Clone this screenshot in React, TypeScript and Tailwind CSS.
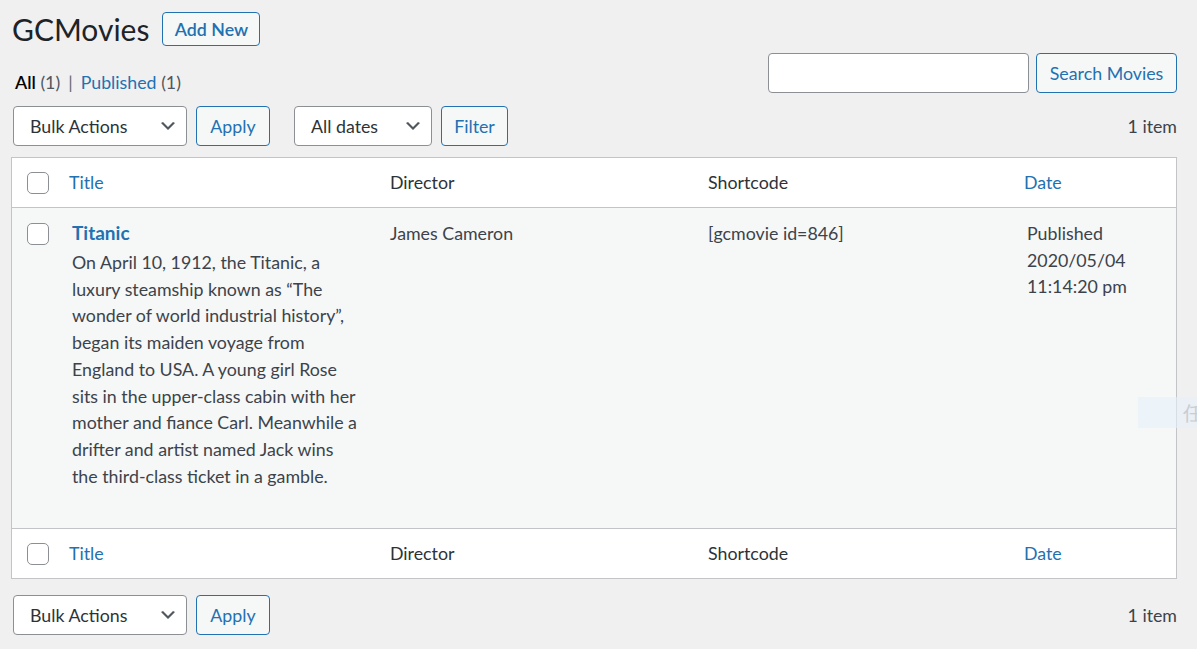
import React from "react";

function Chevron() {
  return (
    <svg
      viewBox="0 0 20 20"
      className="h-[20px] w-[20px] shrink-0 fill-[#50575e]"
      aria-hidden
    >
      <path d="M5 6l5 5 5-5 2 1-7 7-7-7 2-1z" />
    </svg>
  );
}

function Select(props: { label: string; className?: string }) {
  return (
    <div
      className={
        "flex h-[40px] items-center justify-between rounded-[4px] border border-[#8c8f94] bg-white pl-[16px] pr-[8px] text-[#2c3338] " +
        (props.className ?? "")
      }
    >
      <span>{props.label}</span>
      <Chevron />
    </div>
  );
}

function Button(props: { children: React.ReactNode; className?: string }) {
  return (
    <button
      className={
        "flex h-[40px] items-center justify-center whitespace-nowrap rounded-[4px] border border-[#2271b1] bg-[#f6f7f7] px-[8px] text-[#2271b1] " +
        (props.className ?? "")
      }
    >
      {props.children}
    </button>
  );
}

function Checkbox() {
  return (
    <span className="block h-[22px] w-[22px] rounded-[5px] border border-[#8c8f94] bg-white" />
  );
}

function HeadRow() {
  return (
    <div className="grid h-[49px] grid-cols-[46px_318px_318px_319px_1fr] items-center bg-white">
      <div className="pl-[15px]">
        <Checkbox />
      </div>
      <div className="pl-[11px] text-[#2271b1]">Title</div>
      <div className="pl-[14px] text-[#2c3338]">Director</div>
      <div className="pl-[14px] text-[#2c3338]">Shortcode</div>
      <div className="pl-[11px] text-[#2271b1]">Date</div>
    </div>
  );
}

const description = [
  "On April 10, 1912, the Titanic, a",
  "luxury steamship known as \u201cThe",
  "wonder of world industrial history\u201d,",
  "began its maiden voyage from",
  "England to USA. A young girl Rose",
  "sits in the upper-class cabin with her",
  "mother and fiance Carl. Meanwhile a",
  "drifter and artist named Jack wins",
  "the third-class ticket in a gamble.",
];

function TableNav(props: { filters?: boolean }) {
  return (
    <div className="flex h-[40px] items-center justify-between">
      <div className="flex items-center pl-[2px]">
        <Select label="Bulk Actions" className="w-[174px]" />
        <Button className="ml-[9px] w-[74px]">Apply</Button>
        {props.filters && (
          <>
            <Select label="All dates" className="ml-[24px] w-[138px]" />
            <Button className="ml-[9px] w-[67px]">Filter</Button>
          </>
        )}
      </div>
      <span className="text-[#3c434a]">1 item</span>
    </div>
  );
}

export default function App() {
  return (
    <div className="relative min-h-screen bg-[#f0f0f1] pl-[11px] pr-[20px] pt-[12px] font-['Lato','Noto_Sans',sans-serif] text-[17.8px] leading-[26.7px] text-[#3c434a]">
      <div className="flex items-center">
        <h1 className="pl-[1px] text-[30px] leading-[34px] text-[#1d2327]">
          GCMovies
        </h1>
        <button className="ml-[13px] flex h-[34px] w-[98px] items-center justify-center rounded-[4px] border border-[#2271b1] bg-[#f6f7f7] font-semibold text-[#2271b1]">
          Add New
        </button>
      </div>

      <div className="mt-[7px] flex h-[40px] items-start justify-between">
        <div className="mt-[16px] pl-[4px]">
          <span className="font-semibold text-black">All</span>{" "}
          <span className="text-[#50575e]">(1)</span>
          <span className="px-[8px] text-[#646970]">|</span>
          <span className="text-[#2271b1]">Published</span>{" "}
          <span className="text-[#50575e]">(1)</span>
        </div>
        <div className="flex items-center">
          <input className="h-[40px] w-[261px] rounded-[4px] border border-[#8c8f94] bg-white" />
          <Button className="ml-[7px] w-[141px]">Search Movies</Button>
        </div>
      </div>

      <div className="mt-[13px]">
        <TableNav filters />
      </div>

      <div className="mt-[11px] border border-[#c3c4c7]">
        <div className="border-b border-[#c3c4c7]">
          <HeadRow />
        </div>
        <div className="grid grid-cols-[46px_318px_318px_319px_1fr] bg-[#f6f7f7] pb-[39px] pt-[12px]">
          <div className="pl-[15px] pt-[3px]">
            <Checkbox />
          </div>
          <div className="pl-[14px] pr-[10px]">
            <div className="text-[19px] font-bold leading-[26px] text-[#2271b1]">
              Titanic
            </div>
            <p className="mt-[3px]">
              {description.map((line) => (
                <span key={line} className="block whitespace-nowrap">
                  {line}
                </span>
              ))}
            </p>
          </div>
          <div className="pl-[14px]">James Cameron</div>
          <div className="pl-[14px]">[gcmovie id=846]</div>
          <div className="pl-[14px]">
            Published
            <br />
            2020/05/04
            <br />
            11:14:20 pm
          </div>
        </div>
        <div className="border-t border-[#c3c4c7]">
          <HeadRow />
        </div>
      </div>

      <div className="mt-[16px] pb-[15px]">
        <TableNav />
      </div>

      <div className="absolute right-0 top-[397px] flex h-[31px] w-[59px] items-center justify-end overflow-hidden bg-[#e6f0fa]/60 text-[20px] leading-[31px] text-[#c9ccd0]">
        <span className="-mr-[6px]">任</span>
      </div>
    </div>
  );
}
